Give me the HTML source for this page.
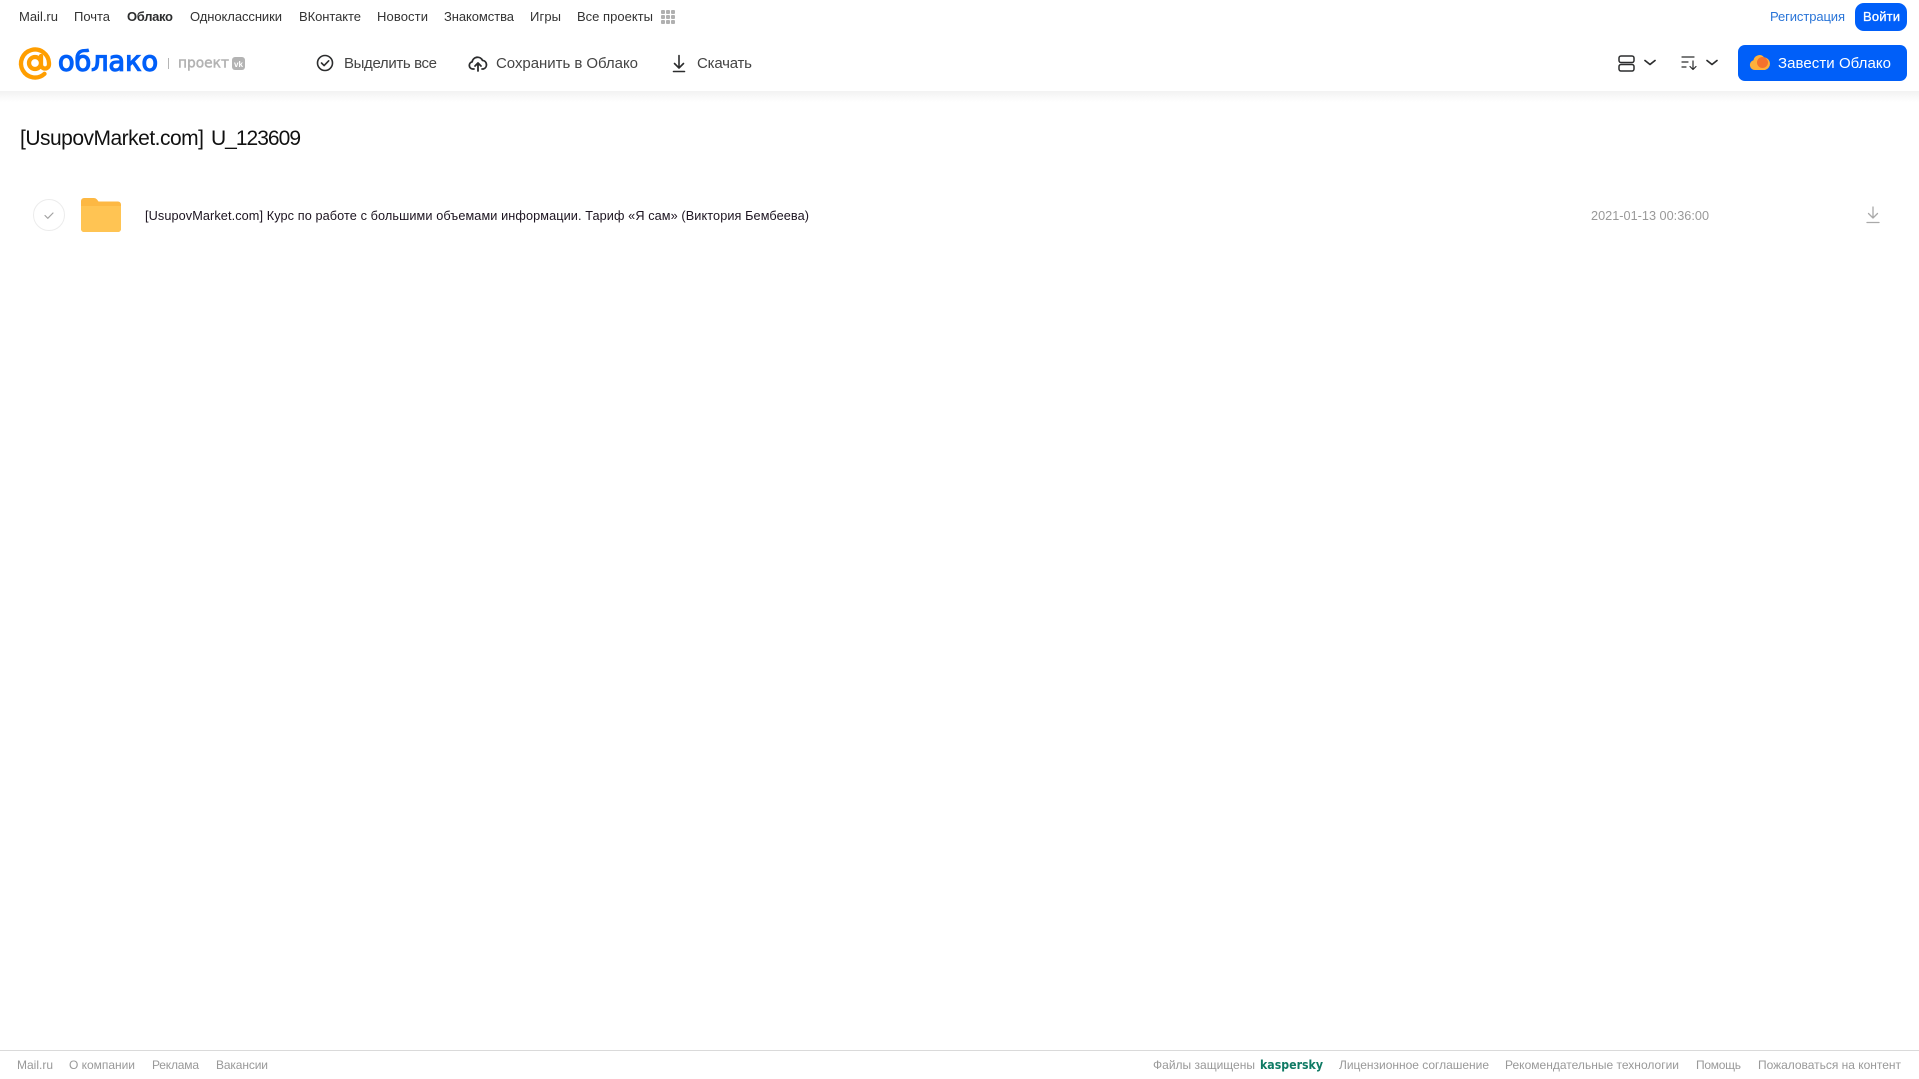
<!DOCTYPE html>
<html lang="ru">
<head>
<meta charset="utf-8">
<title>Облако</title>
<style>
html,body{margin:0;padding:0;width:1919px;height:1079px;overflow:hidden;background:#fff}
svg{display:block}
text{font-family:"Liberation Sans",Arial,sans-serif;}
.n{font-size:13px;fill:#333}
.a{font-size:15px;fill:#444}
.f{font-size:12px;fill:#999}
.d{font-family:"DejaVu Sans","Liberation Sans",sans-serif}
</style>
</head>
<body>
<svg width="1919" height="1079" viewBox="0 0 1919 1079" xmlns="http://www.w3.org/2000/svg">
<defs>
<linearGradient id="s" x1="0" y1="0" x2="0" y2="1"><stop offset="0" stop-color="#f2f2f2"/><stop offset="1" stop-color="#fff"/></linearGradient>
</defs>
<rect width="1919" height="1079" fill="#fff"/>
<rect x="0" y="91" width="1919" height="11" fill="url(#s)"/>

<!-- top nav -->
<text class="n" x="19" y="21" textLength="39">Mail.ru</text>
<text class="n" x="74" y="21" textLength="36">Почта</text>
<text class="n" x="127" y="21" textLength="46" font-weight="700" style="fill:#2c2d2e">Облако</text>
<text class="n" x="190" y="21" textLength="92">Одноклассники</text>
<text class="n" x="299" y="21" textLength="62">ВКонтакте</text>
<text class="n" x="377" y="21" textLength="51">Новости</text>
<text class="n" x="444" y="21" textLength="70">Знакомства</text>
<text class="n" x="530" y="21" textLength="31">Игры</text>
<text class="n" x="577" y="21" textLength="76">Все проекты</text>
<g fill="#b0b0b0">
<rect x="661" y="10" width="4" height="4" rx="1"/><rect x="666" y="10" width="4" height="4" rx="1"/><rect x="671" y="10" width="4" height="4" rx="1"/>
<rect x="661" y="15" width="4" height="4" rx="1"/><rect x="666" y="15" width="4" height="4" rx="1"/><rect x="671" y="15" width="4" height="4" rx="1"/>
<rect x="661" y="20" width="4" height="4" rx="1"/><rect x="666" y="20" width="4" height="4" rx="1"/><rect x="671" y="20" width="4" height="4" rx="1"/>
</g>
<text x="1770" y="21" textLength="75" font-size="13" fill="#2a75d8">Регистрация</text>
<rect x="1855" y="3" width="52" height="28" rx="9" fill="#005ff9"/>
<text x="1863" y="21" textLength="37" font-size="13" fill="#fff" stroke="#fff" stroke-width=".3">Войти</text>

<!-- logo -->
<path d="M44.500 73.800A14 14 0 1 1 49 63v1.500a4 4 0 0 1-8 0V56M41 63a6 6 0 1 1-12 0a6 6 0 0 1 12 0z" fill="none" stroke="#ff9e00" stroke-width="4.300" stroke-linecap="round"/>
<text class="d" x="58" y="70.500" textLength="100" lengthAdjust="spacingAndGlyphs" font-size="28" fill="#005ff9" stroke="#005ff9" stroke-width="1.300">облако</text>
<rect x="168" y="58" width="1" height="11" fill="#b5b5b5"/>
<text class="d" x="178" y="67.300" textLength="51" lengthAdjust="spacingAndGlyphs" font-size="14" fill="#b3b3b3" stroke="#b3b3b3" stroke-width=".5">проект</text>
<rect x="232" y="57" width="13" height="13" rx="3" fill="#b3b3b3"/>
<text x="234" y="67" textLength="9" lengthAdjust="spacingAndGlyphs" font-size="8.500" font-weight="700" fill="#fff">vk</text>

<!-- actions -->
<circle cx="325" cy="63" r="7.500" fill="none" stroke="#2c2d2e" stroke-width="1.600"/>
<path d="M321.500 63l2.600 2.600 4.600-4.800" fill="none" stroke="#2c2d2e" stroke-width="1.600" stroke-linecap="round" stroke-linejoin="round"/>
<text class="a" x="344" y="68" textLength="93">Выделить все</text>
<path d="M474 69h-1.300a3.600 3.600 0 0 1-.6-7.100 5.500 5.500 0 0 1 10.400-1.500 4.400 4.400 0 0 1 .8 8.600H482M478 71v-8M475 66l3-3 3 3" fill="none" stroke="#2c2d2e" stroke-width="1.800" stroke-linecap="round" stroke-linejoin="round"/>
<text class="a" x="496" y="68" textLength="142">Сохранить в Облако</text>
<path d="M679 55.500v12.500M674.500 63.500l4.500 4.500 4.500-4.500M673.500 71.500h11" fill="none" stroke="#2c2d2e" stroke-width="1.600" stroke-linecap="round" stroke-linejoin="round"/>
<text class="a" x="697" y="68" textLength="55">Скачать</text>

<!-- right controls -->
<rect x="1619" y="56" width="15" height="6.500" rx="2" fill="none" stroke="#2c2d2e" stroke-width="1.500"/>
<rect x="1619" y="64.500" width="15" height="6.500" rx="2" fill="none" stroke="#2c2d2e" stroke-width="1.500"/>
<path d="M1645 60.500l5 4 5-4" fill="none" stroke="#2c2d2e" stroke-width="1.700" stroke-linecap="round" stroke-linejoin="round"/>
<path d="M1682 57h12M1682 62h6M1682 67h4M1693 61v8M1690 66.500l3 3 3-3" fill="none" stroke="#2c2d2e" stroke-width="1.200" stroke-linecap="round" stroke-linejoin="round"/>
<path d="M1707 60.500l5 4 5-4" fill="none" stroke="#2c2d2e" stroke-width="1.700" stroke-linecap="round" stroke-linejoin="round"/>
<rect x="1738" y="45" width="169" height="36" rx="7" fill="#005ff9"/>
<path d="M1755 70a5 5 0 0 1-1.500-9.800 6 6 0 0 1 10.500-3 6.500 6.500 0 0 1 1 12.800z" fill="#ffb03a"/>
<circle cx="1762.500" cy="62.500" r="5.500" fill="#f5722c"/>
<text x="1778" y="68" textLength="113" font-size="15" fill="#fff">Завести Облако</text>

<!-- title -->
<text x="20" y="145" textLength="184" font-size="21" fill="#111">[UsupovMarket.com]</text>
<text x="211" y="145" textLength="90" font-size="21" fill="#111">U_123609</text>

<!-- row -->
<circle cx="49" cy="215" r="15.500" fill="#fff" stroke="#ececec" stroke-width="1"/>
<path d="M45 215.500l2.800 2.800 5.200-5.300" fill="none" stroke="#a3a3a3" stroke-width="1.200" stroke-linecap="round" stroke-linejoin="round"/>
<path d="M81 201a3 3 0 0 1 3-3h10a4 4 0 0 1 3 1.500l1.500 2H118a3 3 0 0 1 3 3V229a3 3 0 0 1-3 3H84a3 3 0 0 1-3-3z" fill="#fdb843"/>
<path d="M81 206h40v23a3 3 0 0 1-3 3H84a3 3 0 0 1-3-3z" fill="#ffc453"/>
<text x="145" y="220" textLength="664" font-size="12.700" fill="#1c1420">[UsupovMarket.com] Курс по работе с большими объемами информации. Тариф «Я сам» (Виктория Бембеева)</text>
<text x="1591" y="220" textLength="118" font-size="12.700" fill="#999">2021-01-13 00:36:00</text>
<path d="M1873 207v11M1868.500 213.500l4.500 4.500 4.500-4.500M1867 222.500h12" fill="none" stroke="#a9a9a9" stroke-width="1.300" stroke-linecap="round" stroke-linejoin="round"/>

<!-- footer -->
<rect x="0" y="1050" width="1919" height="1" fill="#dadada"/>
<text class="f" x="17" y="1069" textLength="36">Mail.ru</text>
<text class="f" x="69" y="1069" textLength="66">О компании</text>
<text class="f" x="152" y="1069" textLength="47">Реклама</text>
<text class="f" x="216" y="1069" textLength="52">Вакансии</text>
<text class="f" x="1153" y="1069" textLength="102">Файлы защищены</text>
<text class="d" x="1260" y="1069" textLength="63" lengthAdjust="spacingAndGlyphs" font-size="12.500" font-weight="700" fill="#0f7a64">kaspersky</text>
<text class="f" x="1339" y="1069" textLength="150">Лицензионное соглашение</text>
<text class="f" x="1505" y="1069" textLength="174">Рекомендательные технологии</text>
<text class="f" x="1696" y="1069" textLength="45">Помощь</text>
<text class="f" x="1758" y="1069" textLength="143">Пожаловаться на контент</text>
</svg>
</body>
</html>
